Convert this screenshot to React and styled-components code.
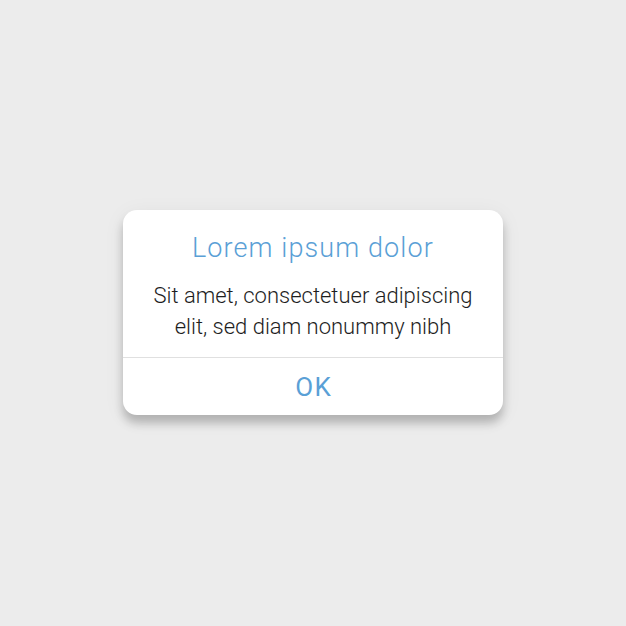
import React from "react";
import styled, { createGlobalStyle } from "styled-components";

const Global = createGlobalStyle`
  html, body { margin: 0; padding: 0; }
  body {
    background: #ececec;
    font-family: Roboto, "Noto Sans", sans-serif;
  }
`;

const Page = styled.div`
  width: 626px;
  height: 626px;
  display: flex;
  align-items: flex-start;
  justify-content: center;
  padding-top: 210px;
  box-sizing: border-box;
`;

const Dialog = styled.div`
  width: 380px;
  background: #ffffff;
  border-radius: 14px;
  box-shadow: 0 8px 10px rgba(0, 0, 0, 0.22), 0 4px 22px rgba(0, 0, 0, 0.06);
  display: flex;
  flex-direction: column;
  overflow: hidden;
`;

const Body = styled.div`
  padding: 23px 16px 15px;
  display: flex;
  flex-direction: column;
  align-items: center;
  text-align: center;
`;

const Title = styled.h2`
  margin: 0;
  font-weight: 300;
  font-size: 27px;
  letter-spacing: 1.1px;
  line-height: 30px;
  color: #5aa0d6;
`;

const Message = styled.p`
  margin: 17px 0 0;
  font-weight: 300;
  font-size: 22px;
  line-height: 31px;
  color: #1e1e1e;
`;

const Divider = styled.div`
  height: 1px;
  background: #e0e0e0;
`;

const Action = styled.button`
  border: 0;
  background: transparent;
  height: 57px;
  padding: 0 0 0 1.5px;
  font-family: inherit;
  font-weight: 400;
  font-size: 26px;
  letter-spacing: 1.5px;
  color: #5aa0d6;
  cursor: pointer;
`;

export default function App() {
  return (
    <>
      <Global />
      <Page>
        <Dialog>
          <Body>
            <Title>Lorem ipsum dolor</Title>
            <Message>
              Sit amet, consectetuer adipiscing
              <br />
              elit, sed diam nonummy nibh
            </Message>
          </Body>
          <Divider />
          <Action>OK</Action>
        </Dialog>
      </Page>
    </>
  );
}
